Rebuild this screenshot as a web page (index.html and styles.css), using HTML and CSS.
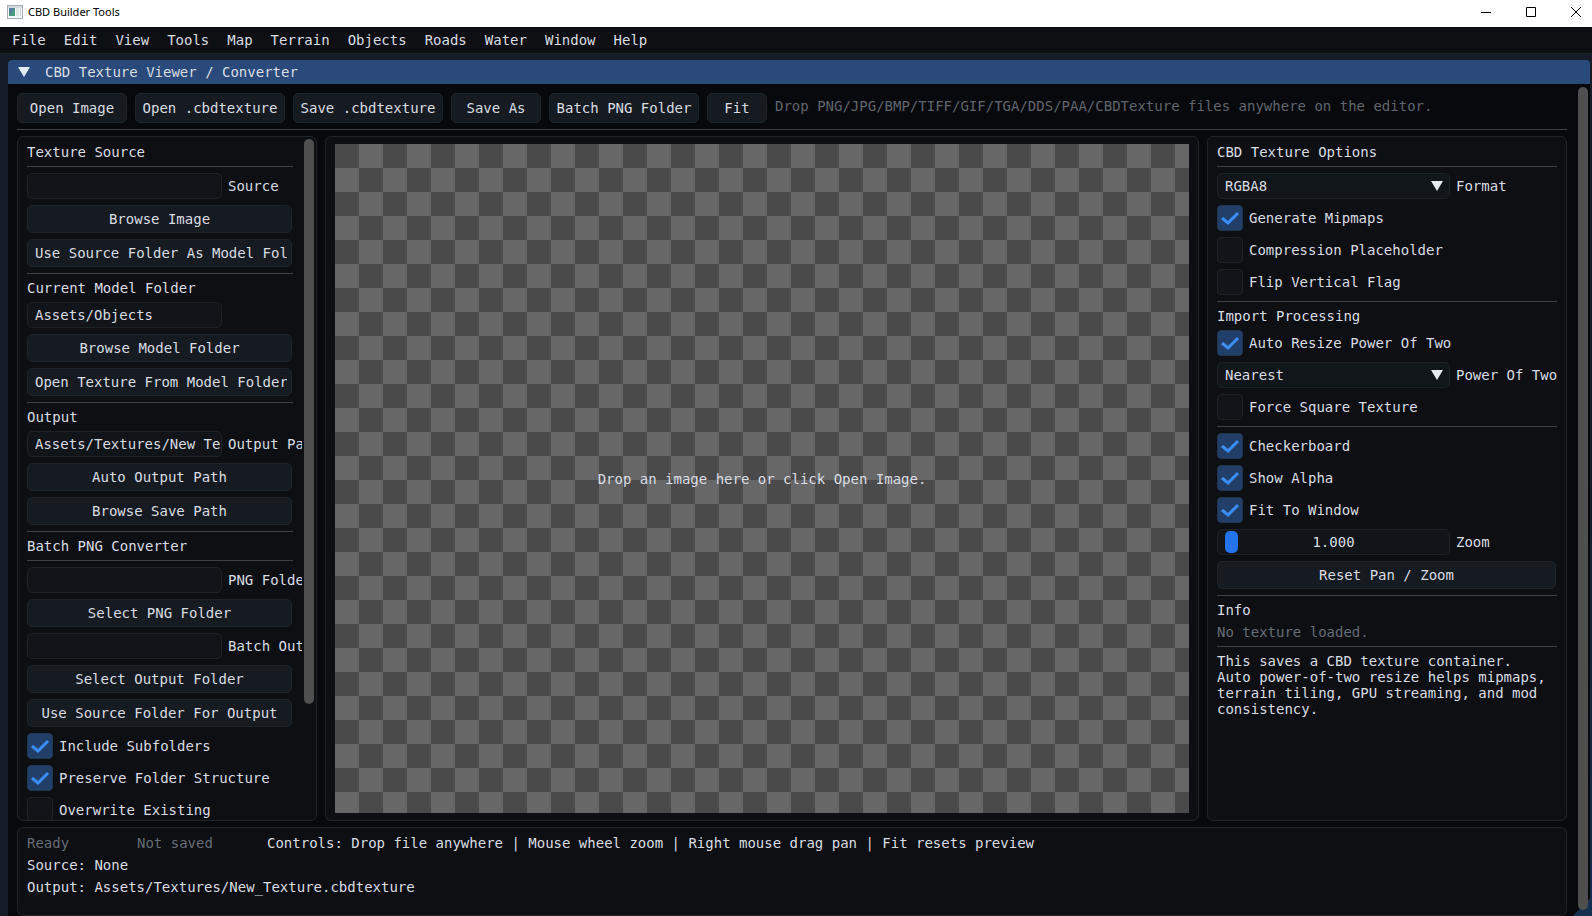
FILE: index.html
```html
<!DOCTYPE html>
<html lang="en">
<head>
<meta charset="utf-8">
<title>CBD Builder Tools</title>
<link rel="stylesheet" href="styles.css">
</head>
<body>
<header class="titlebar">
  <svg class="app-icon" width="16" height="14" viewBox="0 0 16 14" aria-hidden="true"><rect x="0.5" y="0.5" width="15" height="13" fill="#f4f6f7" stroke="#a9b0b5"/><rect x="1" y="1" width="14" height="2" fill="#d5dadd"/><rect x="2" y="3" width="6" height="8" fill="#4a9a80"/><path d="M2 3h6L2 10z" fill="#557f9c"/><rect x="9" y="3" width="3" height="8" fill="#dce6e2"/><rect x="13" y="3" width="1" height="8" fill="#cdd3d6"/></svg>
  <h1 class="app-name">CBD Builder Tools</h1>
  <div class="window-controls">
    <button class="window-button" aria-label="Minimize"><svg width="10" height="10" viewBox="0 0 10 10"><path d="M0 5.5h10"/></svg></button>
    <button class="window-button" aria-label="Maximize"><svg width="10" height="10" viewBox="0 0 10 10"><path d="M.5 .5h9v9h-9z"/></svg></button>
    <button class="window-button" aria-label="Close"><svg width="10" height="10" viewBox="0 0 10 10"><path d="M0 0l10 10M10 0L0 10"/></svg></button>
  </div>
</header>
<nav class="menubar">
  <button class="menu">File</button><button class="menu">Edit</button><button class="menu">View</button><button class="menu">Tools</button><button class="menu">Map</button><button class="menu">Terrain</button><button class="menu">Objects</button><button class="menu">Roads</button><button class="menu">Water</button><button class="menu">Window</button><button class="menu">Help</button>
</nav>
<main class="desktop">
  <section class="window">
    <div class="window-title">
      <svg width="12" height="10" viewBox="0 0 12 10" aria-hidden="true"><path d="M0 0h12L6 10z" fill="#e6ebf2"/></svg>
      <h2 class="window-name">CBD Texture Viewer / Converter</h2>
    </div>
    <div class="window-body">
      <div class="content">
        <div class="toolbar">
          <button class="tool tool-medium">Open Image</button>
          <button class="tool tool-wide">Open .cbdtexture</button>
          <button class="tool tool-wide">Save .cbdtexture</button>
          <button class="tool tool-small">Save As</button>
          <button class="tool tool-wide">Batch PNG Folder</button>
          <button class="tool tool-tiny">Fit</button>
          <p class="hint">Drop PNG/JPG/BMP/TIFF/GIF/TGA/DDS/PAA/CBDTexture files anywhere on the editor.</p>
        </div>
        <div class="panels">
          <section class="panel source-panel">
            <div class="stack source-stack">
              <h3 class="text">Texture Source</h3>
              <hr class="rule">
              <div class="field"><input class="box" id="source" type="text"><label for="source">Source</label></div>
              <button class="button">Browse Image</button>
              <button class="button button-clipped"><span>Use Source Folder As Model Folder</span></button>
              <hr class="rule">
              <label class="text" for="model-folder">Current Model Folder</label>
              <div class="field"><input class="box" id="model-folder" type="text" value="Assets/Objects"></div>
              <button class="button">Browse Model Folder</button>
              <button class="button button-clipped"><span>Open Texture From Model Folder</span></button>
              <hr class="rule">
              <h3 class="text">Output</h3>
              <div class="field"><input class="box" id="output" type="text" value="Assets/Textures/New_Texture.cbdtexture"><label for="output">Output Path</label></div>
              <button class="button">Auto Output Path</button>
              <button class="button">Browse Save Path</button>
              <hr class="rule">
              <h3 class="text">Batch PNG Converter</h3>
              <hr class="rule">
              <div class="field"><input class="box" id="png-folder" type="text"><label for="png-folder">PNG Folder</label></div>
              <button class="button">Select PNG Folder</button>
              <div class="field"><input class="box" id="batch-output" type="text"><label for="batch-output">Batch Output</label></div>
              <button class="button">Select Output Folder</button>
              <button class="button">Use Source Folder For Output</button>
              <label class="check"><input type="checkbox" checked><span>Include Subfolders</span></label>
              <label class="check"><input type="checkbox" checked><span>Preserve Folder Structure</span></label>
              <label class="check"><input type="checkbox"><span>Overwrite Existing</span></label>
            </div>
            <div class="scroll source-scroll"><div class="thumb source-thumb"></div></div>
          </section>
          <section class="panel preview-panel">
            <div class="checker"><p class="drop-text">Drop an image here or click Open Image.</p></div>
          </section>
          <section class="panel options-panel">
            <div class="stack">
              <h3 class="text">CBD Texture Options</h3>
              <hr class="rule">
              <div class="field"><select class="box" id="format"><option>RGBA8</option></select><label for="format">Format</label></div>
              <label class="check"><input type="checkbox" checked><span>Generate Mipmaps</span></label>
              <label class="check"><input type="checkbox"><span>Compression Placeholder</span></label>
              <label class="check"><input type="checkbox"><span>Flip Vertical Flag</span></label>
              <hr class="rule">
              <h3 class="text">Import Processing</h3>
              <label class="check"><input type="checkbox" checked><span>Auto Resize Power Of Two</span></label>
              <div class="field"><select class="box" id="power"><option>Nearest</option></select><label for="power">Power Of Two</label></div>
              <label class="check"><input type="checkbox"><span>Force Square Texture</span></label>
              <hr class="rule">
              <label class="check"><input type="checkbox" checked><span>Checkerboard</span></label>
              <label class="check"><input type="checkbox" checked><span>Show Alpha</span></label>
              <label class="check"><input type="checkbox" checked><span>Fit To Window</span></label>
              <div class="field"><div class="slider"><input id="zoom" type="range" min="1" max="32" value="1"><output class="slider-value" for="zoom">1.000</output></div><label for="zoom">Zoom</label></div>
              <button class="button">Reset Pan / Zoom</button>
              <hr class="rule">
              <h3 class="text">Info</h3>
              <p class="text muted">No texture loaded.</p>
              <hr class="rule">
              <p class="note">This saves a CBD texture container.<br>Auto power-of-two resize helps mipmaps, terrain tiling, GPU streaming, and mod consistency.</p>
            </div>
          </section>
        </div>
        <footer class="panel status">
          <div class="status-row"><span class="muted status-ready">Ready</span><span class="muted status-saved">Not saved</span><span>Controls: Drop file anywhere | Mouse wheel zoom | Right mouse drag pan | Fit resets preview</span></div>
          <div class="text">Source: None</div>
          <div class="text">Output: Assets/Textures/New_Texture.cbdtexture</div>
        </footer>
      </div>
      <div class="scroll window-scroll"><div class="thumb"></div></div>
    </div>
  </section>
</main>
</body>
</html>
```
FILE: styles.css
```css
* { box-sizing: border-box; }

body {
  margin: 0;
  height: 100vh;
  display: flex;
  flex-direction: column;
  overflow: hidden;
  background: #151c27;
  color: #d9dde2;
  font: 14px/16px "DejaVu Sans Mono", monospace;
  white-space: nowrap;
}

h1, h2, h3, p { margin: 0; font: inherit; }
button, input, select { font: inherit; color: inherit; margin: 0; }

.titlebar {
  flex: none;
  height: 27px;
  display: flex;
  align-items: center;
  padding: 0 0 4px 7px;
  background: #fff;
  color: #000;
}
.app-icon { flex: none; }
.app-name { margin-left: 5px; font: 11px/16px "Noto Sans", "Open Sans", sans-serif; }
.window-controls { display: flex; gap: 35px; margin-left: auto; padding-right: 11px; }
.window-button {
  display: flex;
  align-items: center;
  justify-content: center;
  width: 10px;
  height: 22px;
  padding: 0;
  border: 0;
  background: none;
}
.window-button svg { flex: none; fill: none; stroke: #000; }

.menubar {
  flex: none;
  height: 26px;
  display: flex;
  align-items: center;
  gap: 18px;
  padding: 0 12px;
  background: #0d0f12;
}
.menu { padding: 0; border: 0; background: none; }

.desktop {
  flex: 1;
  min-height: 0;
  padding: 6px 2px 0 8px;
  border-top: 1px solid #1b2530;
  background: linear-gradient(160deg, #151c27 70%, #16304f);
}
.window {
  height: 100%;
  display: flex;
  flex-direction: column;
  overflow: hidden;
  border-radius: 4px 4px 0 0;
  background: #07090c;
}
.window-title {
  flex: none;
  height: 24px;
  display: flex;
  align-items: center;
  gap: 15px;
  padding-left: 10px;
  background: #294a7a;
}
.window-body {
  flex: 1;
  min-height: 0;
  display: flex;
  background: linear-gradient(to bottom right, transparent 50%, #16304f 50%) no-repeat right bottom / 18px 18px;
}
.content {
  flex: 1;
  min-width: 0;
  display: flex;
  flex-direction: column;
  padding: 9px 10px 0 9px;
}

.scroll { flex: none; display: flex; flex-direction: column; }
.thumb { flex: 1; width: 10px; border-radius: 5px; background: #4f4f4f; }
.window-scroll { width: 13px; padding: 3px 0 6px 1px; }

.toolbar {
  flex: none;
  display: flex;
  gap: 8px;
  padding-bottom: 6px;
  border-bottom: 1px solid #3f4145;
}
.tool, .button {
  padding: 0;
  border: 1px solid #1e2429;
  border-radius: 5px;
  background: #161b21;
  text-align: center;
}
.tool { height: 30px; }
.tool-tiny { width: 60px; }
.tool-small { width: 90px; }
.tool-medium { width: 110px; }
.tool-wide { width: 150px; }
.hint { padding-top: 5px; color: #60656d; }
.muted { color: #666c76; }

.panels { flex: 1; min-height: 0; display: flex; gap: 8px; padding: 6px 0; }
.panel {
  border: 1px solid #202429;
  border-radius: 6px;
  background: #0d0f12;
  overflow: hidden;
}
.source-panel { flex: none; width: 300px; display: flex; }
.preview-panel { flex: 1; min-width: 0; display: flex; padding: 7px 9px; }
.options-panel { flex: none; width: 360px; }

.stack { display: flex; flex-direction: column; gap: 6px; padding: 7px 9px 0; }
.source-stack { flex: 1; min-width: 0; overflow: hidden; }
.stack > * { flex: none; }
.source-scroll { width: 14px; padding: 2px 0 2px 2px; }
.source-thumb { flex: 0 0 565px; }

.text { display: block; height: 16px; }
.rule { width: 100%; height: 1px; margin: 0; border: 0; background: #3f4145; }

.field { display: flex; align-items: center; gap: 6px; height: 26px; }
.field label { flex: none; }
.box {
  flex: none;
  height: 26px;
  padding: 0 0 0 7px;
  border: 1px solid #1d2227;
  border-radius: 5px;
  outline: 0;
  background: #111519;
  line-height: 24px;
}
.source-panel .box { width: 195px; }
.options-panel .box, .slider { width: 233px; }
select.box {
  appearance: none;
  background: #11161b url("data:image/svg+xml,%3Csvg xmlns='http://www.w3.org/2000/svg' width='12' height='10'%3E%3Cpath d='M0 0h12L6 10z' fill='%23e6ebf2'/%3E%3C/svg%3E") no-repeat right 6px center;
}

.button { height: 28px; margin-right: 1px; overflow: hidden; }
.button-clipped { padding: 0 4px 0 7px; text-align: left; }
.button-clipped span { display: block; overflow: hidden; }

.check { display: flex; align-items: center; gap: 6px; height: 26px; }
.check input {
  appearance: none;
  flex: none;
  width: 26px;
  height: 26px;
  border: 1px solid #1d2227;
  border-radius: 4px;
  background: #111519;
}
.check input:checked {
  border-color: #20364f;
  background: #213f68 url("data:image/svg+xml,%3Csvg xmlns='http://www.w3.org/2000/svg' width='20' height='16'%3E%3Cpath d='M2 8l6 5L18 3' fill='none' stroke='%233b8df5' stroke-width='3'/%3E%3C/svg%3E") no-repeat center;
}

.slider {
  flex: none;
  display: grid;
  height: 26px;
  border: 1px solid #1d2227;
  border-radius: 5px;
  background: #111519;
}
.slider input, .slider-value { grid-area: 1 / 1; }
.slider input { appearance: none; width: 100%; height: 24px; padding: 0 7px; background: none; }
.slider input::-webkit-slider-thumb {
  appearance: none;
  width: 13px;
  height: 22px;
  border-radius: 5px;
  background: #2373eb;
}
.slider-value { align-self: center; text-align: center; pointer-events: none; }

.note { white-space: normal; }

.checker {
  flex: 1;
  display: flex;
  align-items: center;
  justify-content: center;
  background: repeating-conic-gradient(#676767 0 25%, #4a4a4a 0 50%) 0 0 / 48px 48px;
}

.status {
  flex: none;
  height: 89px;
  display: flex;
  flex-direction: column;
  gap: 6px;
  padding: 7px 9px 0;
}
.status-row { display: flex; }
.status-ready { width: 110px; }
.status-saved { width: 130px; }
```
